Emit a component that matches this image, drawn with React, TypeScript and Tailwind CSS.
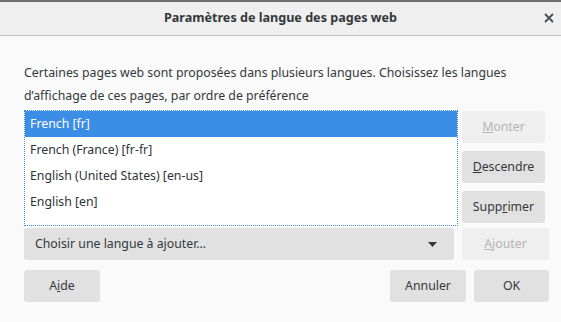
const font = { fontFamily: '"Noto Sans", "Open Sans", sans-serif' };

const langs = [
  "French [fr]",
  "French (France) [fr-fr]",
  "English (United States) [en-us]",
  "English [en]",
];

function Btn({
  children,
  disabled,
  className = "",
}: {
  children: React.ReactNode;
  disabled?: boolean;
  className?: string;
}) {
  return (
    <button
      className={
        "h-[32px] rounded-[3px] text-[12.3px] flex items-center justify-center " +
        (disabled ? "bg-[#efefef] text-[#b3b5b6] " : "bg-[#e1e1e1] text-[#33393b] ") +
        className
      }
    >
      {children}
    </button>
  );
}

export default function App() {
  return (
    <div
      style={font}
      className="w-[561px] h-[322px] bg-[#fafafa] border-t-2 border-[#6e6e6e] flex flex-col text-[#2e3436]"
    >
      <div className="relative h-[34px] bg-[#efefef] border-b border-[#c2c2c2] flex items-center justify-center">
        <span className="text-[12.6px] font-bold text-[#33393b]">Paramètres de langue des pages web</span>
        <svg
          className="absolute right-[7px] top-[11px]"
          width="10"
          height="10"
          viewBox="0 0 10 10"
        >
          <path d="M1 1L9 9M9 1L1 9" stroke="#4a5054" strokeWidth="1.8" />
        </svg>
      </div>

      <div className="pl-[24px] pr-[12px] pt-[25px] flex flex-col">
        <p className="text-[12.3px] leading-[23px] text-[#33393b]">
          Certaines pages web sont proposées dans plusieurs langues. Choisissez les langues
          <br />
          d’affichage de ces pages, par ordre de préférence
        </p>

        <div className="mt-[3px] flex gap-[4px]">
          <div className="w-[434px] h-[116px] bg-white border border-dotted border-[#3a8be3]">
            {langs.map((l, i) => (
              <div
                key={l}
                className={
                  "h-[26px] pl-[5px] flex items-center text-[12.3px] " +
                  (i === 0 ? "bg-[#3c8de5] text-white" : "text-[#2e3436]")
                }
              >
                {l}
              </div>
            ))}
          </div>
          <div className="pt-[1px] flex flex-col gap-[8px]">
            <Btn disabled className="w-[83px]">
              <u>M</u>onter
            </Btn>
            <Btn className="w-[83px]">
              <u>D</u>escendre
            </Btn>
            <Btn className="w-[83px]">
              Supp<u>r</u>imer
            </Btn>
          </div>
        </div>

        <div className="mt-[2px] flex gap-[8px]">
          <div className="w-[430px] h-[32px] rounded-[3px] bg-[#e1e1e1] flex items-center justify-between pl-[11px] pr-[17px] text-[12.3px] text-[#33393b]">
            <span>Choisir une langue à ajouter…</span>
            <svg width="9" height="5" viewBox="0 0 9 5">
              <path d="M0 0H9L4.5 5Z" fill="#33393b" />
            </svg>
          </div>
          <Btn disabled className="w-[87px]">
            <u>A</u>jouter
          </Btn>
        </div>

        <div className="mt-[10px] flex">
          <Btn className="w-[76px]">
            A<u>i</u>de
          </Btn>
          <div className="flex-1" />
          <Btn className="w-[76px]">Annuler</Btn>
          <Btn className="w-[75px] ml-[8px]">OK</Btn>
        </div>
      </div>
    </div>
  );
}
